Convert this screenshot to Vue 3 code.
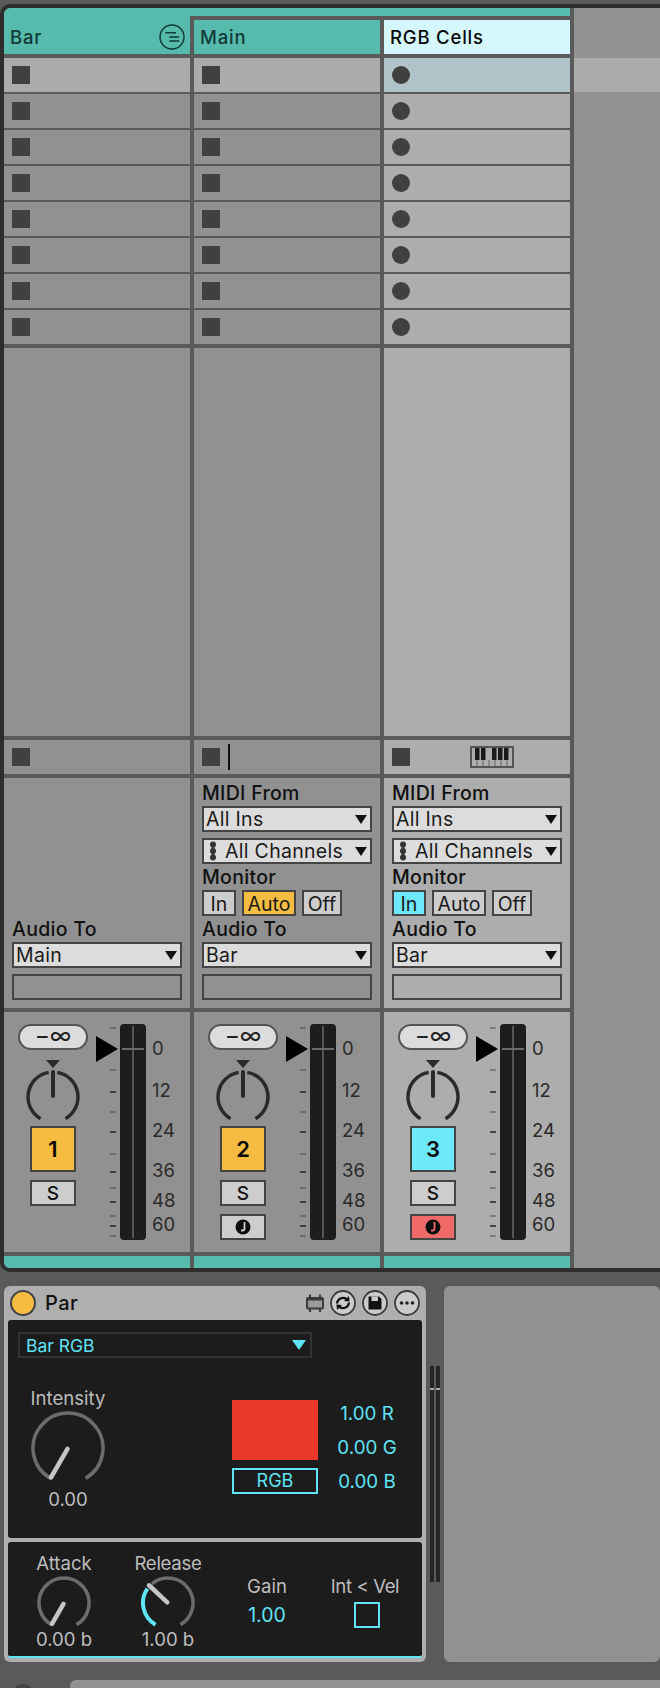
<script setup>
// Fader scale positions, px from the top of the fader
const ticks = [
  { y: 3, major: false }, { y: 45, major: false }, { y: 67, major: true }, { y: 87, major: false },
  { y: 107, major: true }, { y: 129, major: false }, { y: 147, major: true }, { y: 163, major: false },
  { y: 177, major: true }, { y: 191, major: false }, { y: 201, major: true }, { y: 211, major: false },
]
const scale = [
  { label: '0', y: 24 }, { label: '12', y: 66 }, { label: '24', y: 106 },
  { label: '36', y: 146 }, { label: '48', y: 176 }, { label: '60', y: 200 },
]

const tracks = [
  { name: 'Bar', num: 1, kind: 'group', slot: 'square' },
  { name: 'Main', num: 2, kind: 'midi', slot: 'square', monitor: 'Auto', audioTo: 'Bar', arm: false },
  { name: 'RGB Cells', num: 3, kind: 'midi', slot: 'circle', monitor: 'In', audioTo: 'Bar', arm: true, selected: true },
]

// arc helper, angles are degrees from 12 o'clock
function arc(cx, cy, r, from, to) {
  const pt = (a) => {
    const rad = (a * Math.PI) / 180
    return `${(cx + r * Math.sin(rad)).toFixed(2)} ${(cy - r * Math.cos(rad)).toFixed(2)}`
  }
  const large = to - from > 180 ? 1 : 0
  return `M${pt(from)} A${r} ${r} 0 ${large} 1 ${pt(to)}`
}
function needle(cx, cy, r0, r1, a) {
  const rad = (a * Math.PI) / 180
  const s = Math.sin(rad)
  const c = Math.cos(rad)
  return `M${(cx + r0 * s).toFixed(2)} ${(cy - r0 * c).toFixed(2)} L${(cx + r1 * s).toFixed(2)} ${(cy - r1 * c).toFixed(2)}`
}
</script>

<template>
  <div class="page">
    <section class="session">
      <div class="tracks">
        <div class="strip"></div>
        <div class="track-row">
          <div v-for="t in tracks" :key="t.num" class="track" :class="{ selected: t.selected }">
            <header class="head" :class="{ group: t.kind === 'group' }">
              <span>{{ t.name }}</span>
              <svg v-if="t.kind === 'group'" class="fold" width="28" height="28" viewBox="0 0 28 28">
                <circle cx="14" cy="14" r="12" fill="none" stroke="#123a36" stroke-width="1.500" />
                <path d="M7.300 9.700H18M11.300 14H21.300M11.300 18H21.300" stroke="#123a36" stroke-width="1.600" fill="none" />
              </svg>
            </header>

            <div class="slots">
              <div v-for="n in 8" :key="n" class="slot" :class="{ first: n === 1 }">
                <i :class="t.slot"></i>
              </div>
            </div>
            <div class="empty"></div>

            <div class="stop-row">
              <i class="square"></i>
              <i v-if="t.num === 2" class="cursor"></i>
              <svg v-if="t.num === 3" class="keys" width="44" height="22" viewBox="0 0 44 22">
                <rect x="1" y="1" width="42" height="20" fill="none" stroke="#555" stroke-width="2" />
                <path d="M7 14v6M13 14v6M19 14v6M25 14v6M31 14v6M37 14v6" stroke="#666" stroke-width="1" />
                <path d="M5 2h4.500v12h-4.500zM11 2h4.500v12h-4.500zM22 2h4.500v12h-4.500zM28 2h4.500v12h-4.500zM34 2h4.500v12h-4.500z" fill="#1a1a1a" />
              </svg>
            </div>

            <div class="io">
              <template v-if="t.kind === 'midi'">
                <div class="io-label">MIDI From</div>
                <div class="select"><span>All Ins</span><i class="caret"></i></div>
                <div class="select gap">
                  <svg width="8" height="20" viewBox="0 0 8 20" class="chan">
                    <path d="M4 2v16" stroke="#333" stroke-width="3" />
                    <circle cx="4" cy="3.500" r="3" fill="#333" /><circle cx="4" cy="10" r="3" fill="#333" /><circle cx="4" cy="16.500" r="3" fill="#333" />
                  </svg>
                  <span>All Channels</span><i class="caret"></i>
                </div>
                <div class="io-label">Monitor</div>
                <div class="monitor">
                  <button class="in" :class="{ on: t.monitor === 'In' }">In</button>
                  <button class="auto" :class="{ on: t.monitor === 'Auto' }">Auto</button>
                  <button class="off">Off</button>
                </div>
              </template>
              <div class="io-label">Audio To</div>
              <div class="select"><span>{{ t.audioTo || 'Main' }}</span><i class="caret"></i></div>
              <div class="blank"></div>
            </div>

            <div class="mixer">
              <div class="controls">
                <div class="pill">−∞</div>
                <svg class="pan" width="60" height="62" viewBox="0 0 60 62">
                  <path d="M23 0h14l-7 8z" fill="#2a2a2a" />
                  <path :d="arc(30, 37, 25, -150, -10)" class="pan-arc" />
                  <path :d="arc(30, 37, 25, 10, 150)" class="pan-arc" />
                  <path d="M30 12v24" stroke="#2a2a2a" stroke-width="4" stroke-linecap="round" />
                </svg>
                <button class="track-btn" :class="{ cyan: t.selected }">{{ t.num }}</button>
                <button class="small-btn">S</button>
                <button v-if="t.arm !== undefined" class="small-btn" :class="{ armed: t.arm }">
                  <svg width="16" height="16" viewBox="0 0 16 16">
                    <circle cx="8" cy="8" r="7.500" fill="#0e0e0e" />
                    <path d="M9.500 3v6.500a2 2 0 0 1-2 2h-1.500" fill="none" :stroke="t.arm ? '#f06a6a' : '#cdcdcd'" stroke-width="1.800" />
                  </svg>
                </button>
              </div>
              <div class="tick-col">
                <i class="pointer"></i>
                <i v-for="k in ticks" :key="k.y" class="tick" :class="{ major: k.major }" :style="{ top: k.y + 'px' }"></i>
              </div>
              <div class="fader"><i class="fader-v"></i><i class="fader-h"></i></div>
              <div class="labels">
                <span v-for="s in scale" :key="s.label" :style="{ top: s.y + 'px' }">{{ s.label }}</span>
              </div>
            </div>
            <div class="foot"></div>
          </div>
        </div>
      </div>
      <div class="side">
        <div class="side-hl"></div>
      </div>
    </section>

    <section class="devices">
      <div class="device">
        <div class="title">
          <i class="power"></i>
          <span class="dev-name">Par</span>
          <svg class="chip" width="18" height="18" viewBox="0 0 18 18">
            <rect x="1" y="4" width="16" height="10.500" rx="1" fill="#9b9b9b" stroke="#3a3a3a" stroke-width="2" />
            <path d="M1 5.500h16" stroke="#3a3a3a" stroke-width="2" />
            <path d="M4 0.500v3M14 0.500v3M4 15v3M14 15v3" stroke="#3a3a3a" stroke-width="2" />
          </svg>
          <svg class="round" width="26" height="26" viewBox="0 0 26 26">
            <circle cx="13" cy="13" r="12" fill="#ccc" stroke="#3a3a3a" stroke-width="1.800" />
            <path d="M7 13.500a6 6 0 0 1 9.500-4.500M19 12.500a6 6 0 0 1-9.500 4.500" fill="none" stroke="#111" stroke-width="2.200" />
            <path d="M19 6l.5 5.500-5.500-.5zM7 20l-.5-5.500 5.500.5z" fill="#111" />
          </svg>
          <svg class="round" width="26" height="26" viewBox="0 0 26 26">
            <circle cx="13" cy="13" r="12" fill="#ccc" stroke="#3a3a3a" stroke-width="1.800" />
            <path d="M6.500 6.500h10.500l2.500 2.500v10.500h-13z" fill="#111" />
            <rect x="9.500" y="6.500" width="6.500" height="4.500" fill="#ccc" />
          </svg>
          <svg class="round" width="26" height="26" viewBox="0 0 26 26">
            <circle cx="13" cy="13" r="12" fill="#ccc" stroke="#3a3a3a" stroke-width="1.800" />
            <circle cx="7.500" cy="13" r="1.800" fill="#222" /><circle cx="13" cy="13" r="1.800" fill="#222" /><circle cx="18.500" cy="13" r="1.800" fill="#222" />
          </svg>
        </div>

        <div class="panel upper">
          <div class="dd"><span>Bar RGB</span><i class="dd-caret"></i></div>
          <div class="upper-row">
            <div class="knob big">
              <div class="k-label">Intensity</div>
              <svg width="76" height="76" viewBox="0 0 76 76">
                <path :d="arc(38, 38, 35, -150, 150)" class="k-track" stroke-width="3.500" />
                <path :d="needle(38, 38, 1, 34, -150)" class="k-needle" stroke-width="4.500" />
              </svg>
              <div class="k-value">0.00</div>
            </div>
            <div class="color">
              <div class="swatch"></div>
              <div class="rgb-btn">RGB</div>
            </div>
            <div class="rgb-vals">
              <span>1.00 R</span><span>0.00 G</span><span>0.00 B</span>
            </div>
          </div>
        </div>

        <div class="panel lower">
          <div class="knob attack">
            <div class="k-label">Attack</div>
            <svg width="56" height="56" viewBox="0 0 56 56">
              <path :d="arc(28, 28, 25, -150, 150)" class="k-track" stroke-width="3.500" />
              <path :d="needle(28, 28, 1, 24, -150)" class="k-needle" stroke-width="4.500" />
            </svg>
            <div class="k-value">0.00 b</div>
          </div>
          <div class="knob release">
            <div class="k-label release-label">Release</div>
            <svg width="56" height="56" viewBox="0 0 56 56">
              <path :d="arc(28, 28, 25, -40, 150)" class="k-track" stroke-width="3.500" />
              <path :d="arc(28, 28, 25, -150, -55)" class="k-active" stroke-width="4" />
              <path :d="needle(28, 28, 1, 26, -47)" class="k-needle" stroke-width="4.500" />
            </svg>
            <div class="k-value">1.00 b</div>
          </div>
          <div class="gain">
            <div class="k-label">Gain</div>
            <div class="gain-val">1.00</div>
          </div>
          <div class="vel">
            <div class="k-label vel-label">Int &lt; Vel</div>
            <i class="check"></i>
          </div>
        </div>
      </div>

      <div class="meter">
        <div class="meter-bar"><i></i></div>
        <div class="meter-bar"><i></i></div>
      </div>

      <div class="next-device"></div>
    </section>

    <footer class="bottom">
      <i class="bottom-dot"></i>
      <div class="bottom-bar"></div>
    </footer>
  </div>
</template>

<style>
html, body { margin: 0; background: #5a5a5a; }
</style>

<style scoped>
.page {
  width: 660px;
  height: 1688px;
  overflow: hidden;
  background: #5a5a5a;
  padding-top: 4px;
  box-sizing: border-box;
  font-family: Inter, "Noto Sans", sans-serif;
  color: #111;
}
i { display: block; }

/* session view */
.session {
  height: 1268px;
  box-sizing: border-box;
  border: 4px solid #2d2d2d;
  border-right: 0;
  border-radius: 10px 0 0 10px;
  overflow: hidden;
  display: flex;
}
.tracks {
  width: 570px;
  flex: none;
  box-sizing: border-box;
  border-right: 4px solid #5a5a5a;
  display: flex;
  flex-direction: column;
}
.strip { height: 8px; background: #56bbad; }
.track-row { display: flex; flex: 1; }
.track {
  width: 190px;
  flex: none;
  box-sizing: border-box;
  border-right: 4px solid #5a5a5a;
  background: #919191;
  display: flex;
  flex-direction: column;
}
.track:last-child { width: 186px; border-right: 0; }
.track.selected { background: #adadad; }

.head {
  height: 34px;
  border-top: 4px solid #5a5a5a;
  border-bottom: 4px solid #5a5a5a;
  background: #56bbad;
  color: #123a36;
  font-size: 18.500px;
  font-weight: 500;
  letter-spacing: 0.8px;
  display: flex;
  align-items: center;
  justify-content: space-between;
  padding: 0 4px 0 6px;
}
.head.group { border-top: 0; padding-top: 4px; }
.selected .head { background: #d5f8ff; color: #0a0a0a; }

.slots {
  display: flex;
  flex-direction: column;
  gap: 2px;
  border-bottom: 4px solid #5a5a5a;
  background: #5a5a5a;
}
.slot { height: 34px; display: flex; align-items: center; padding-left: 8px; background: #919191; }
.slot.first { background: #ababab; }
.selected .slot { background: #adadad; }
.selected .slot.first { background: #afc3c8; }
.square, .circle { width: 18px; height: 18px; background: #404040; }
.circle { border-radius: 50%; }

.empty { height: 388px; border-bottom: 4px solid #5a5a5a; }

.stop-row {
  height: 34px;
  border-bottom: 4px solid #5a5a5a;
  padding-left: 8px;
  display: flex;
  align-items: center;
}
.cursor { width: 2px; height: 26px; background: #111; margin-left: 8px; }
.keys { margin-left: 60px; }

.io {
  height: 222px;
  padding: 0 8px 8px;
  border-bottom: 4px solid #5a5a5a;
  display: flex;
  flex-direction: column;
  justify-content: flex-end;
}
.io-label {
  height: 26px;
  line-height: 27px;
  font-size: 19.500px;
  font-weight: 500;
  letter-spacing: 0.3px;
  color: #111;
  white-space: nowrap;
}
.select, .blank {
  height: 26px;
  box-sizing: border-box;
  border: 2px solid #444;
}
.select {
  background: #dcdcdc;
  display: flex;
  align-items: center;
  padding: 0 3px 0 2px;
  font-size: 19.500px;
  letter-spacing: 0.3px;
  color: #1a1a1a;
  white-space: nowrap;
}
.select.gap { margin-top: 6px; }
.select .caret { margin-left: auto; }
.caret {
  width: 0;
  height: 0;
  border-left: 6.500px solid transparent;
  border-right: 6.500px solid transparent;
  border-top: 9px solid #111;
}
.chan { margin: 0 8px 0 3px; flex: none; }
.blank { margin-top: 6px; }
.monitor { display: flex; gap: 6px; }
.monitor button {
  height: 26px;
  box-sizing: border-box;
  border: 2px solid #444;
  background: #cdcdcd;
  padding: 0;
  font: 19.500px Inter, "Noto Sans", sans-serif;
  color: #1a1a1a;
}
.monitor .in { width: 34px; }
.monitor .auto { width: 54px; }
.monitor .off { width: 40px; }
.monitor .in.on { background: #6ee8fb; }
.monitor .auto.on { background: #f6bc41; }

/* mixer */
.mixer {
  height: 240px;
  border-bottom: 4px solid #5a5a5a;
  box-sizing: content-box;
  display: flex;
  padding-left: 14px;
}
.controls {
  width: 70px;
  padding-top: 12px;
  display: flex;
  flex-direction: column;
  align-items: center;
}
.pill {
  width: 70px;
  height: 26px;
  box-sizing: border-box;
  border: 2px solid #555;
  border-radius: 13px;
  background: #dcdcdc;
  text-align: center;
  font-size: 23px;
  line-height: 20px;
  color: #222;
}
.pan { margin-top: 10px; }
.pan-arc { fill: none; stroke: #2a2a2a; stroke-width: 3.500; }
.track-btn {
  width: 46px;
  height: 46px;
  margin-top: 4px;
  box-sizing: border-box;
  border: 2px solid #444;
  background: #f6bc41;
  font: 600 22px Inter, "Noto Sans", sans-serif;
  color: #0a0a0a;
  padding: 0;
}
.track-btn.cyan { background: #6ee8fb; }
.small-btn {
  width: 46px;
  height: 26px;
  margin-top: 8px;
  box-sizing: border-box;
  border: 2px solid #444;
  background: #cdcdcd;
  font: 500 19px Inter, "Noto Sans", sans-serif;
  color: #111;
  padding: 0;
  display: flex;
  align-items: center;
  justify-content: center;
}
.small-btn.armed { background: #f06a6a; }
.tick-col {
  width: 24px;
  margin-left: 8px;
  margin-top: 12px;
  height: 216px;
  position: relative;
}
.pointer {
  position: absolute;
  left: 0;
  top: 12px;
  width: 0;
  height: 0;
  border-top: 13px solid transparent;
  border-bottom: 13px solid transparent;
  border-left: 22px solid #000;
}
.tick {
  position: absolute;
  left: 14px;
  width: 6px;
  height: 2px;
  background: #6d6d6d;
}
.tick.major { background: #404040; }
.selected .tick { background: #7c7c7c; }
.selected .tick.major { background: #444; }
.fader {
  width: 26px;
  height: 216px;
  margin-top: 12px;
  background: #1d1d1d;
  border-radius: 4px;
  position: relative;
}
.fader-v {
  position: absolute;
  left: 12px;
  top: 2px;
  bottom: 2px;
  width: 2px;
  background: #555;
}
.fader-h {
  position: absolute;
  left: 2px;
  right: 2px;
  top: 24px;
  height: 2px;
  background: #6b6b6b;
}
.labels {
  margin-top: 12px;
  margin-left: 6px;
  height: 216px;
  position: relative;
  flex: 1;
}
.labels span {
  position: absolute;
  left: 0;
  transform: translateY(-50%);
  font-size: 18.500px;
  color: #2a2a2a;
}
.foot { height: 12px; background: #56bbad; }

.side {
  flex: 1;
  background: #919191;
  padding-top: 50px;
}
.side-hl { height: 34px; background: #ababab; }

/* device view */
.devices {
  display: flex;
  height: 376px;
  margin-top: 14px;
  padding-left: 4px;
}
.device {
  width: 422px;
  flex: none;
  box-sizing: border-box;
  background: #afafaf;
  border-radius: 6px;
  padding: 0 4px;
}
.title {
  height: 34px;
  display: flex;
  align-items: center;
  gap: 6px;
  padding-right: 2px;
}
.power {
  width: 26px;
  height: 26px;
  box-sizing: border-box;
  margin-left: 2px;
  border-radius: 50%;
  background: #f6bc41;
  border: 2px solid #444;
}
.dev-name {
  font-size: 20px;
  font-weight: 500;
  letter-spacing: 0.5px;
  margin-left: 3px;
  margin-right: auto;
  color: #111;
}
.panel { background: #1c1c1c; border-radius: 3px; color: #bdbdbd; }
.upper { height: 218px; padding: 12px 10px 0; box-sizing: border-box; }
.dd {
  width: 294px;
  height: 26px;
  box-sizing: border-box;
  border: 2px solid #333;
  display: flex;
  align-items: center;
  justify-content: space-between;
  padding: 0 4px 0 6px;
  color: #5fe4f5;
  font-size: 17.500px;
}
.dd-caret {
  width: 0;
  height: 0;
  border-left: 7px solid transparent;
  border-right: 7px solid transparent;
  border-top: 10px solid #5fe4f5;
}
.upper-row { display: flex; margin-top: 30px; }
.knob { display: flex; flex-direction: column; align-items: center; }
.big { width: 76px; margin-left: 12px; }
.k-label, .k-value {
  font-size: 18.600px;
  height: 20px;
  line-height: 20px;
  white-space: nowrap;
  color: #bdbdbd;
}
.vel-label { letter-spacing: -0.4px; }
.release-label { letter-spacing: -0.3px; }
.big svg { margin-top: 2px; }
.big .k-value { margin-top: 3px; }
.k-track { fill: none; stroke: #6c6c6c; }
.k-active { fill: none; stroke: #5fe4f5; }
.k-needle { fill: none; stroke: #c6c6c6; stroke-linecap: round; }
.color { margin-left: 126px; margin-top: 12px; width: 86px; flex: none; }
.swatch { height: 60px; background: #e9382a; }
.rgb-btn {
  height: 26px;
  margin-top: 8px;
  box-sizing: border-box;
  border: 2px solid #5fe4f5;
  color: #5fe4f5;
  font-size: 18px;
  line-height: 22px;
  text-align: center;
}
.rgb-vals {
  margin-left: 14px;
  width: 70px;
  padding-top: 16px;
  display: flex;
  flex-direction: column;
  gap: 14px;
  align-items: center;
  color: #5fe4f5;
  font-size: 18.800px;
}
.rgb-vals span { height: 20px; line-height: 20px; white-space: nowrap; }

.lower {
  height: 116px;
  margin-top: 4px;
  box-sizing: border-box;
  border-bottom: 2px solid #5fe4f5;
  display: flex;
}
.attack { width: 80px; margin-left: 16px; padding-top: 11px; }
.release { width: 80px; margin-left: 24px; padding-top: 11px; }
.attack svg, .release svg { margin-top: 2px; margin-bottom: -2px; }
.gain {
  width: 60px;
  margin-left: 29px;
  padding-top: 34px;
  display: flex;
  flex-direction: column;
  align-items: center;
}
.gain-val { color: #5fe4f5; font-size: 19.500px; margin-top: 9px; line-height: 20px; }
.vel {
  width: 80px;
  margin-left: 28px;
  padding-top: 34px;
  display: flex;
  flex-direction: column;
  align-items: center;
}
.check {
  width: 26px;
  height: 26px;
  box-sizing: border-box;
  border: 2px solid #5fe4f5;
  margin: 6px 0 0 4px;
}

.meter { display: flex; gap: 2px; margin: 80px 0 0 4px; height: 216px; }
.meter-bar { width: 4px; background: #262626; position: relative; }
.meter-bar i { position: absolute; left: 0; right: 0; top: 22px; height: 2px; background: #a5a5a5; }
.next-device {
  width: 216px;
  margin-left: 4px;
  background: #919191;
  border-radius: 6px;
  flex: none;
}

.bottom { display: flex; margin-top: 18px; padding-left: 12px; }
.bottom-dot { width: 22px; height: 22px; border-radius: 50%; background: #444; margin-top: 4px; }
.bottom-bar { margin-left: 36px; flex: 1; height: 20px; background: #919191; border-radius: 6px 0 0 0; }
</style>
